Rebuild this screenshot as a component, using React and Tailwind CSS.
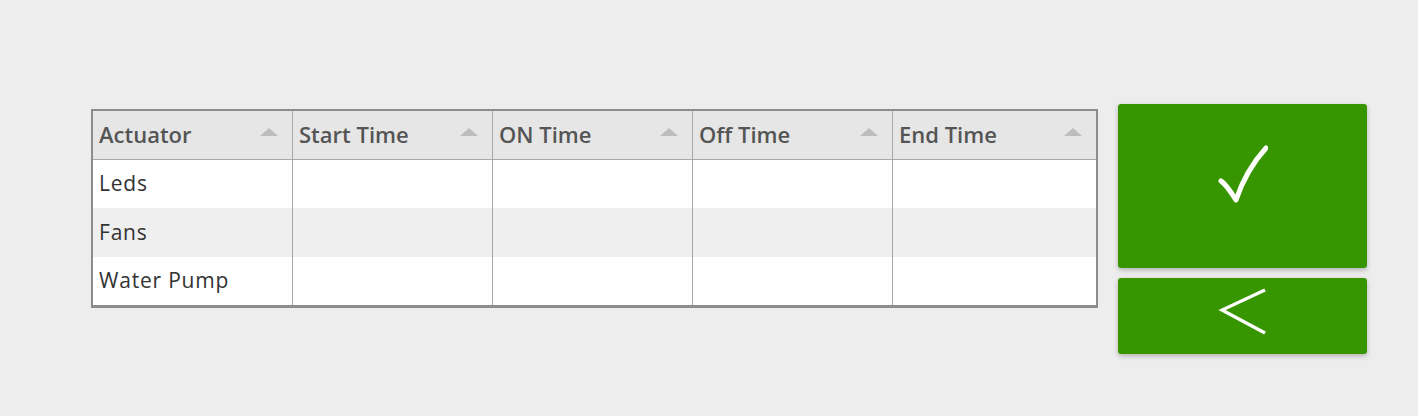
const columns = ['Actuator', 'Start Time', 'ON Time', 'Off Time', 'End Time']
const rows = ['Leds', 'Fans', 'Water Pump']

function SortArrow() {
  return (
    <svg width="18" height="8" viewBox="0 0 18 8" className="-mt-[6px] shrink-0">
      <polygon points="9,0 18,8 0,8" fill="#bdbdbd" />
    </svg>
  )
}

export default function App() {
  return (
    <div className="min-h-screen bg-[#ededed] font-['Open_Sans',sans-serif]">
      <div className="flex items-start gap-5 pl-[91px] pt-[104px]">
        <div className="mt-[5px] w-[1007px] border-2 border-b-[3px] border-[#8c8c8c] bg-white">
          <div className="flex h-[49px] border-b border-[#a8a8a8] bg-[#e6e6e6]">
            {columns.map((c, i) => (
              <div
                key={c}
                className={`flex items-center justify-between pl-[6px] pr-[14px] ${
                  i < 4 ? 'w-[200px] border-r border-[#a8a8a8]' : 'flex-1'
                }`}
              >
                <span className="-mt-[2px] text-[22px] font-semibold text-[#555]">{c}</span>
                <SortArrow />
              </div>
            ))}
          </div>
          {rows.map((r, ri) => (
            <div
              key={r}
              className={`flex ${ri === 1 ? 'h-[49px] bg-[#efefef]' : 'h-[48px] bg-white'}`}
            >
              {columns.map((c, i) => (
                <div
                  key={c}
                  className={`flex items-center pl-[6px] text-[21px] tracking-[0.8px] text-[#333] ${
                    i < 4 ? 'w-[200px] border-r border-[#a8a8a8]' : 'flex-1'
                  }`}
                >
                  {i === 0 ? r : ''}
                </div>
              ))}
            </div>
          ))}
        </div>
        <div className="flex w-[249px] flex-col gap-[10px]">
          <button
            aria-label="Confirm"
            className="flex h-[164px] items-center justify-center rounded-[3px] bg-[#379600] shadow-[0_2px_5px_rgba(0,0,0,0.25)]"
          >
            <svg width="50" height="60" viewBox="0 0 50 60" className="-mt-[23px]">
              <path
                d="M3 36 Q8 39 18 55 Q28 25 48 3"
                fill="none"
                stroke="white"
                strokeWidth="5"
                strokeLinecap="round"
                strokeLinejoin="round"
              />
            </svg>
          </button>
          <button
            aria-label="Back"
            className="flex h-[76px] items-center justify-center rounded-[3px] bg-[#379600] shadow-[0_2px_5px_rgba(0,0,0,0.25)]"
          >
            <svg width="50" height="48" viewBox="0 0 50 48" className="-mt-[8px] ml-[1px]">
              <polyline points="47,2 4,22 47,45" fill="none" stroke="white" strokeWidth="3.2" />
            </svg>
          </button>
        </div>
      </div>
    </div>
  )
}
